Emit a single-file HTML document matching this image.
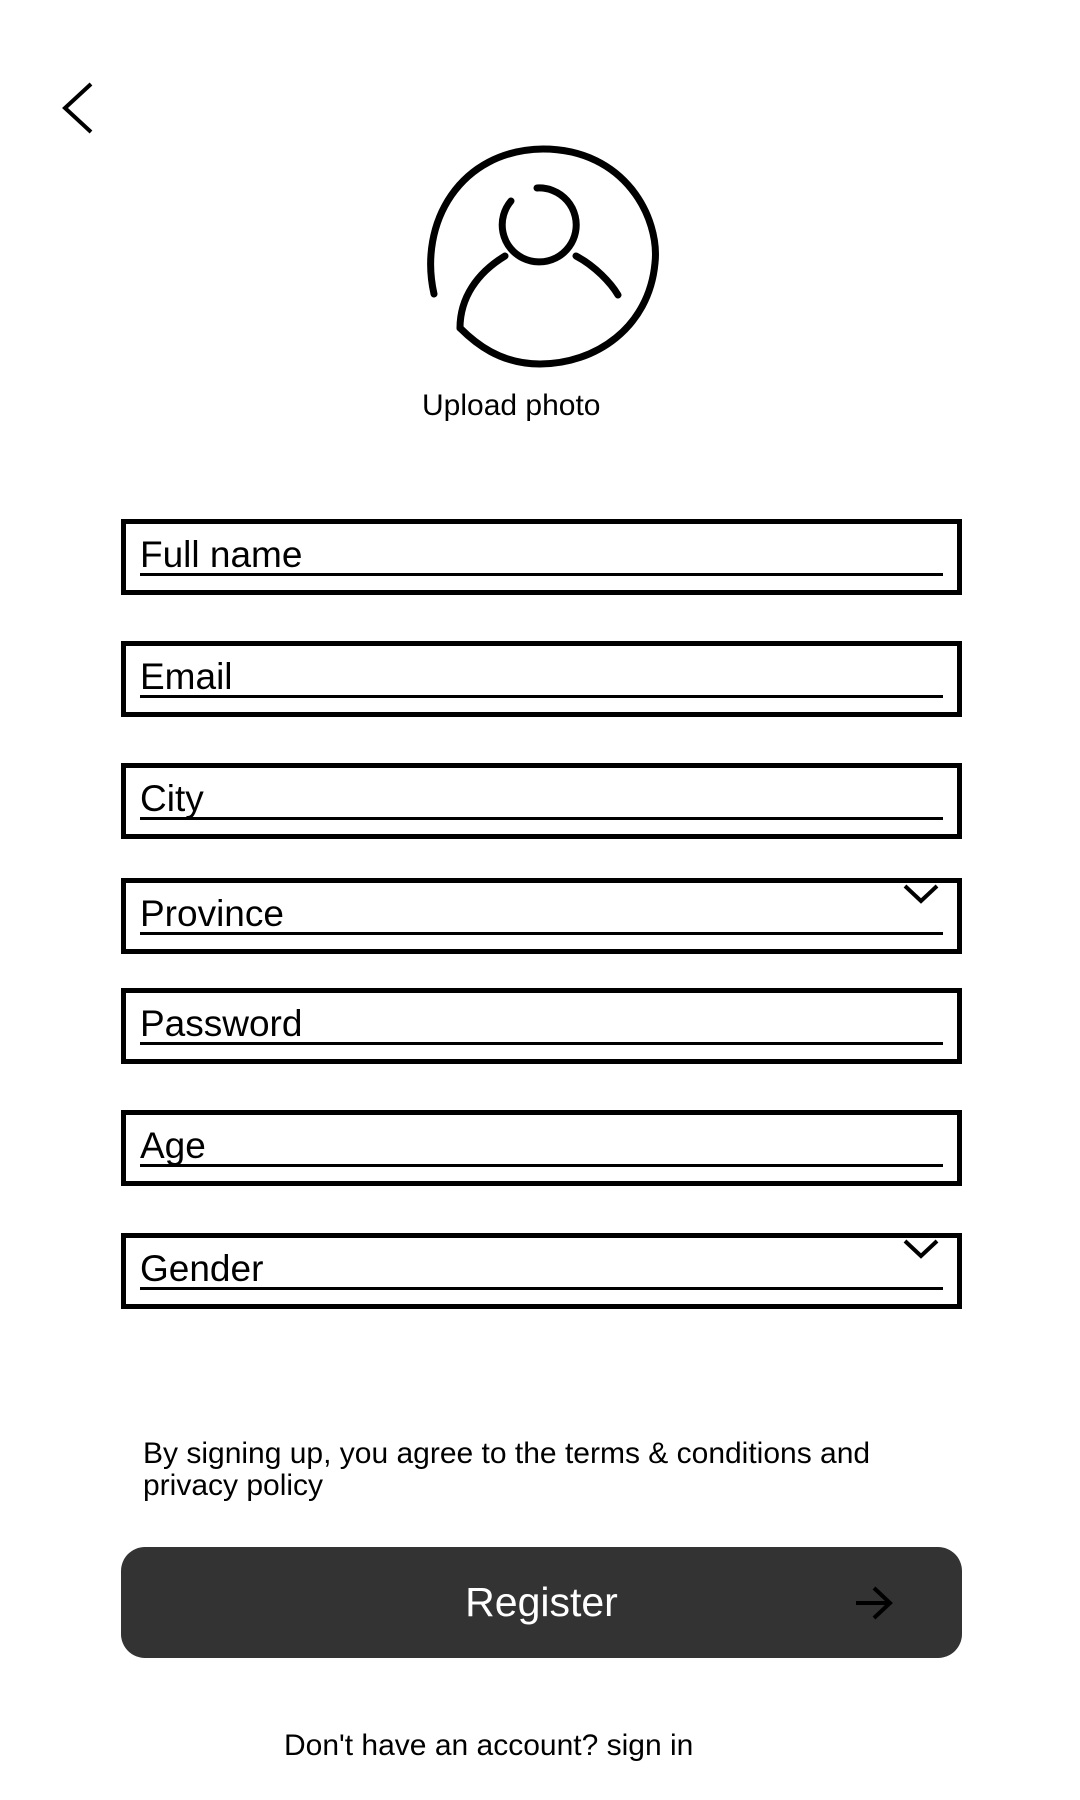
<!DOCTYPE html>
<html><head><meta charset="utf-8"><style>
html,body{margin:0;padding:0;background:#fff;}
body{width:1080px;height:1800px;position:relative;overflow:hidden;font-family:"Liberation Sans",sans-serif;color:#000;}
.f{position:absolute;left:121px;width:831px;height:66px;border:5px solid #000;}
.f .l{position:absolute;left:14px;top:11px;font-size:37px;line-height:40px;}
.f .u{position:absolute;left:14px;right:14px;top:49px;height:3px;background:#000;}
.f svg{position:absolute;right:18px;top:0px;}
.t{position:absolute;white-space:nowrap;}
</style></head><body>
<svg style="position:absolute;left:55px;top:78px" width="50" height="60" viewBox="0 0 50 60"><path d="M36 6 L10 30 L36 54" fill="none" stroke="#000" stroke-width="4"/></svg>
<svg style="position:absolute;left:415px;top:138px" width="250" height="240" viewBox="0 0 250 240">
<g fill="none" stroke="#000" stroke-width="7" stroke-linecap="round">
<path d="M19 156 C3 85 45 12 128 11 C210 11 245 80 240 125 C234 190 180 226 125 226 C85 226 60 205 45 190"/>
<path d="M96 63 A37 37 0 1 0 122 50"/>
<path d="M90 118 C62 135 45 160 45 190"/>
<path d="M161 118 C180 128 196 145 203 157"/>
</g></svg>
<div class="t" style="left:422px;top:389px;font-size:30px;line-height:34px;">Upload photo</div>

<div class="f" style="top:519px"><div class="l">Full name</div><div class="u"></div></div>
<div class="f" style="top:641px"><div class="l">Email</div><div class="u"></div></div>
<div class="f" style="top:763px"><div class="l">City</div><div class="u"></div></div>
<div class="f" style="top:878px"><div class="l">Province</div><div class="u"></div><svg width="36" height="22" viewBox="0 0 36 22"><path d="M2 3 L18 18 L34 3" fill="none" stroke="#000" stroke-width="4"/></svg></div>
<div class="f" style="top:988px"><div class="l">Password</div><div class="u"></div></div>
<div class="f" style="top:1110px"><div class="l">Age</div><div class="u"></div></div>
<div class="f" style="top:1233px"><div class="l">Gender</div><div class="u"></div><svg width="36" height="22" viewBox="0 0 36 22"><path d="M2 3 L18 18 L34 3" fill="none" stroke="#000" stroke-width="4"/></svg></div>

<div class="t" style="left:143px;top:1438px;font-size:30px;line-height:32px;">By signing up, you agree to the terms &amp; conditions and<br>privacy policy</div>

<div style="position:absolute;left:121px;top:1547px;width:841px;height:111px;background:#333;border-radius:24px;"></div>
<div class="t" style="left:121px;width:841px;top:1579px;text-align:center;font-size:41px;line-height:46px;color:#fff;">Register</div>
<svg style="position:absolute;left:852px;top:1584px" width="44" height="38" viewBox="0 0 44 38"><g fill="none" stroke="#000" stroke-width="4"><path d="M4 19 H38"/><path d="M22 4 L38 19 L22 34"/></g></svg>

<div class="t" style="left:284px;top:1729px;font-size:30px;line-height:34px;">Don't have an account? sign in</div>
</body></html>
